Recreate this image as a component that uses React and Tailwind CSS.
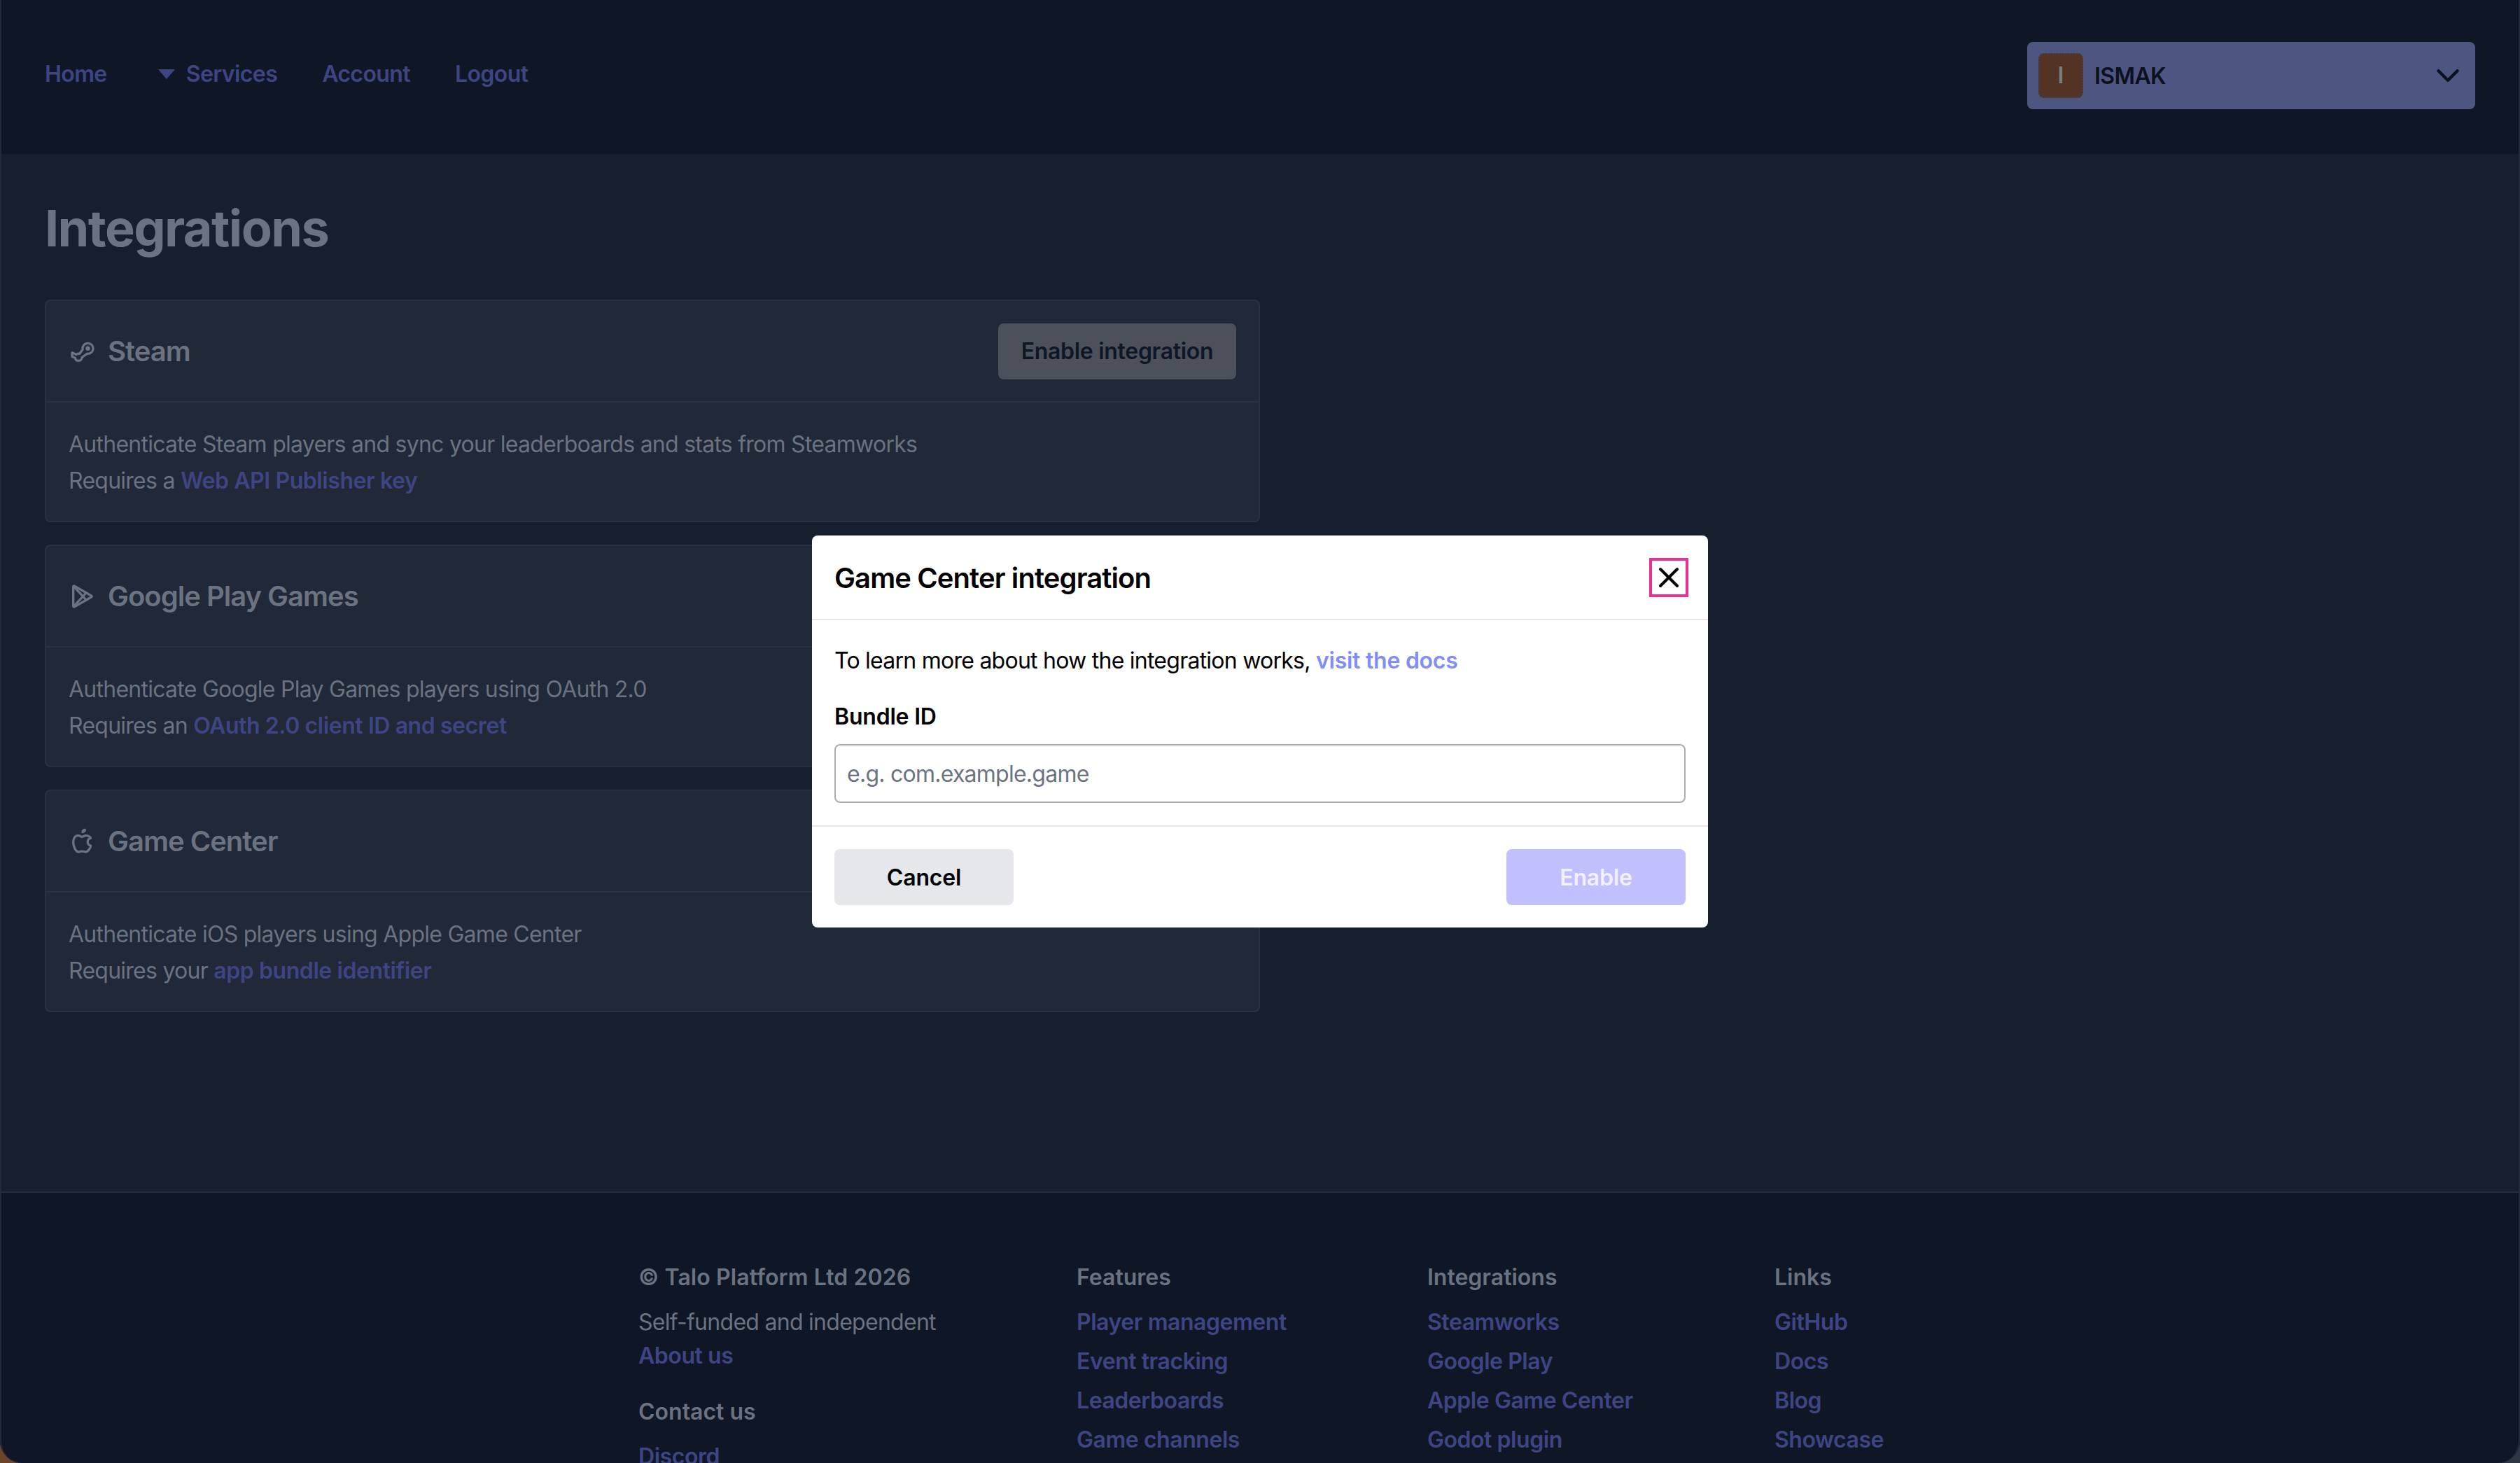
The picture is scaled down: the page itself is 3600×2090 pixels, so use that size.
import React from "react";
import { TbBrandSteam, TbBrandGooglePlay, TbBrandApple, TbX, TbChevronDown } from "react-icons/tb";

const FONT = "[font-family:Inter,'Liberation_Sans',sans-serif]";

function NavLink({ children }) {
  return <a className="text-[32px] leading-[48px] font-semibold tracking-[-0.6px] text-[#3e4583]">{children}</a>;
}

function Card({ icon, title, line, pre, link, button }) {
  return (
    <div className="rounded-lg border-2 border-[#2a3140] bg-[#212837]">
      <div className="flex h-[145px] items-center justify-between border-b-2 border-[#2a3140] px-8">
        <div className="flex items-center gap-4 text-[#6b7280]">
          {icon}
          <h2 className="pt-[1px] text-[40px] font-semibold leading-[48px] tracking-[-1px]">{title}</h2>
        </div>
        {button && (
          <button className="h-20 w-[340px] rounded-lg bg-[#4b505b] pt-[1px] text-[32px] font-semibold tracking-[-0.3px] text-[#0f1726]">Enable integration</button>
        )}
      </div>
      <div className="px-8 pb-[32px] pt-[33px] text-[32px] leading-[52px] tracking-[-0.74px] text-[#6b7280]">
        <p className="translate-y-[1px]">{line}</p>
        <p className="translate-y-[1px]">
          {pre} <a className="font-semibold tracking-[-0.42px] text-[#3e4583]">{link}</a>
        </p>
      </div>
    </div>
  );
}

function FootCol({ title, items }) {
  return (
    <div>
      <h3 className="text-[32px] leading-[48px] font-semibold text-[#6b7280]">{title}</h3>
      <ul className="mt-4 flex flex-col gap-2">
        {items.map((i) => (
          <li key={i} className="text-[32px] leading-[48px] font-semibold tracking-[-0.45px] text-[#3e4583]">{i}</li>
        ))}
      </ul>
    </div>
  );
}

export default function App() {
  return (
    <div className={`relative h-[2090px] w-[3600px] overflow-hidden bg-[linear-gradient(90deg,#6b4528_50%,#2f3644_50%)] ${FONT}`}>
      <div className="flex h-full flex-col overflow-hidden rounded-b-[32px] bg-[#171e2d]">
        <header className="flex h-[220px] shrink-0 items-start justify-between bg-[#0f1726] px-16 pt-[60px]">
          <nav className="flex items-center gap-16 pt-[22px]">
            <NavLink>Home</NavLink>
            <div className="flex items-center gap-4 pl-[9px]">
              <span className="h-0 w-0 border-x-[12px] border-t-[14px] border-x-transparent border-t-[#3e4583]" />
              <NavLink>Services</NavLink>
            </div>
            <NavLink>Account</NavLink>
            <NavLink>Logout</NavLink>
          </nav>
          <div className="flex h-24 w-[640px] items-center rounded-lg bg-[#4d5680] pl-4 pr-3">
            <div className="flex h-16 w-16 items-center justify-center rounded-lg border-2 border-dotted border-[#44404a] bg-[#533424] text-[32px] font-semibold text-[#7a7d85]">I</div>
            <span className="ml-4 pt-[2px] text-[32px] font-semibold tracking-[-0.6px] text-[#0c111e]">ISMAK</span>
            <TbChevronDown className="ml-auto text-[#0c111e]" size={54} strokeWidth={2} />
          </div>
        </header>
        <main className="h-[1482px] shrink-0 px-16">
          <h1 className="pt-[66px] text-[72px] font-bold leading-[80px] tracking-[-1.6px] text-[#6b7280]">Integrations</h1>
          <div className="mt-[62px] flex w-[1736px] flex-col gap-8">
            <Card
              icon={<TbBrandSteam size={40} />}
              title="Steam"
              line="Authenticate Steam players and sync your leaderboards and stats from Steamworks"
              pre="Requires a"
              link="Web API Publisher key"
              button
            />
            <Card
              icon={<TbBrandGooglePlay size={40} />}
              title="Google Play Games"
              line="Authenticate Google Play Games players using OAuth 2.0"
              pre="Requires an"
              link="OAuth 2.0 client ID and secret"
            />
            <Card
              icon={<TbBrandApple size={40} />}
              title="Game Center"
              line="Authenticate iOS players using Apple Game Center"
              pre="Requires your"
              link="app bundle identifier"
            />
          </div>
        </main>
        <footer className="shrink-0 border-t-2 border-[#262d3c] bg-[#0f1726] pl-[912px] pt-[97px]">
          <div className="flex">
            <div className="w-[626px]">
              <h3 className="text-[32px] leading-[48px] font-semibold tracking-[0.1px] text-[#6b7280]">© Talo Platform Ltd 2026</h3>
              <p className="mt-4 text-[32px] leading-[48px] tracking-[-0.72px] text-[#6b7280]">Self-funded and independent</p>
              <a className="block text-[32px] leading-[48px] font-semibold tracking-[-0.45px] text-[#3e4583]">About us</a>
              <h3 className="mt-8 text-[32px] leading-[48px] font-semibold text-[#6b7280]">Contact us</h3>
              <a className="mt-4 block text-[32px] leading-[48px] font-semibold tracking-[-0.45px] text-[#3e4583]">Discord</a>
            </div>
            <div className="w-[501px]">
              <FootCol title="Features" items={["Player management", "Event tracking", "Leaderboards", "Game channels"]} />
            </div>
            <div className="w-[496px]">
              <FootCol title="Integrations" items={["Steamworks", "Google Play", "Apple Game Center", "Godot plugin"]} />
            </div>
            <FootCol title="Links" items={["GitHub", "Docs", "Blog", "Showcase"]} />
          </div>
        </footer>
      </div>
      <div className="pointer-events-none absolute inset-0 rounded-b-[32px] border-x-2 border-[#232b3a]" />
      <div className="absolute inset-0 flex items-center justify-center">
        <div className="h-[560px] w-[1280px] rounded-lg bg-white">
          <div className="flex h-[121px] items-center justify-between border-b-2 border-[#e5e7eb] pl-8 pr-7">
            <h2 className="pt-[2px] text-[40px] font-semibold leading-[56px] tracking-[-0.9px] text-black">Game Center integration</h2>
            <button className="flex h-14 w-14 items-center justify-center border-4 border-[#ec2f94] text-black">
              <TbX className="shrink-0" size={48} strokeWidth={2} />
            </button>
          </div>
          <div className="px-8 pt-[34px] text-[32px]">
            <p className="leading-[48px] tracking-[-0.75px] text-black">
              To learn more about how the integration works, <a className="font-semibold tracking-[-0.25px] text-[#818cf8]">visit the docs</a>
            </p>
            <label className="mt-8 block font-semibold leading-[48px] tracking-[-0.2px] text-black">Bundle ID</label>
            <div className="mt-[15px] flex h-[84px] items-center rounded-lg border-2 border-[#adadad] px-4 pt-[1px] tracking-[-0.75px] text-[#6b7280]">e.g. com.example.game</div>
          </div>
          <div className="mt-8 flex items-center justify-between border-t-2 border-[#e5e7eb] px-8 pt-8">
            <button className="h-20 w-64 rounded-lg bg-[#e5e7eb] pt-[1px] text-[32px] font-semibold tracking-[-0.2px] text-black">Cancel</button>
            <button className="h-20 w-64 rounded-lg bg-[#c1bffd] pt-[1px] text-[32px] font-semibold tracking-[-0.2px] text-[#f0f0ff]">Enable</button>
          </div>
        </div>
      </div>
    </div>
  );
}
